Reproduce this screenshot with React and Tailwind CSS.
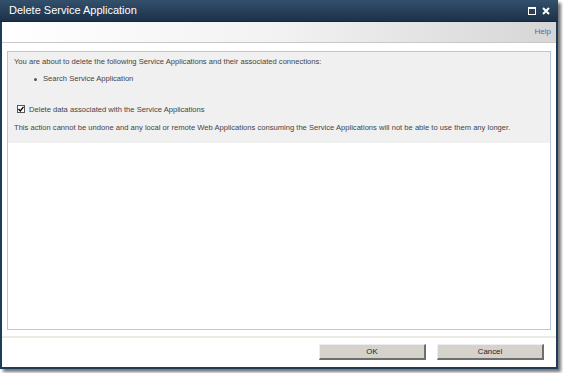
import React from 'react';

const font = { fontFamily: '"Liberation Sans", Arial, sans-serif' };

const App = () => {
    return (
        <div className="w-[563px] h-[373px] bg-white overflow-hidden" style={font}>
            <div className="w-[558px] h-[369px] flex flex-col shadow-[3px_3px_3px_rgba(0,0,0,0.55)]">
                {/* title bar */}
                <div className="h-[22px] flex items-center justify-between bg-gradient-to-b from-[#33506c] to-[#1d3149] border-b border-[#15263a] pl-[9px] pr-[8px]">
                    <span className="text-white text-[11px] leading-none">Delete Service Application</span>
                    <div className="flex items-center gap-[6px]">
                        <svg width="8" height="8" viewBox="0 0 8 8">
                            <rect x="0.5" y="0.5" width="7" height="7" fill="none" stroke="#fff" strokeWidth="1" />
                            <rect x="0" y="0" width="8" height="2" fill="#fff" />
                        </svg>
                        <svg width="8" height="8" viewBox="0 0 8 8">
                            <path d="M1 1 L7 7 M7 1 L1 7" stroke="#fff" strokeWidth="2" />
                        </svg>
                    </div>
                </div>

                <div className="flex-1 flex flex-col border-x-2 border-b-2 border-[#1f3b5a] bg-white">
                    {/* toolbar */}
                    <div className="h-[21px] flex items-center justify-end bg-gradient-to-r from-white via-[#f2f2f2] to-[#d6d6d6] border-b border-[#c8c8c8] pr-[5px]">
                        <span className="text-[8px] text-[#3a74b8]">Help</span>
                    </div>

                    {/* content */}
                    <div className="flex-1 flex flex-col px-[5px] pt-[8px]">
                        <div className="flex-1 border border-[#b8c8d8] bg-white">
                            <div className="bg-[#f0f0f0] h-[91px] pl-[6px] pt-[4px] text-[7.6px] text-[#444]">
                                <p>You are about to delete the following Service Applications and their associated connections:</p>
                                <div className="flex items-center mt-[6px] pl-[20px]">
                                    <span className="w-[3px] h-[3px] rounded-full bg-[#555] mr-[6px]" />
                                    <span>Search Service Application</span>
                                </div>
                                <div className="flex items-center mt-[19px] pl-[3px]">
                                    <span className="w-[8px] h-[8px] border border-[#555] bg-white flex items-center justify-center mr-[4px]">
                                        <svg width="6" height="6" viewBox="0 0 6 6">
                                            <path d="M0.5 3 L2.3 5 L5.5 0.8" fill="none" stroke="#000" strokeWidth="1.3" />
                                        </svg>
                                    </span>
                                    <span>Delete data associated with the Service Applications</span>
                                </div>
                                <p className="mt-[7px]">This action cannot be undone and any local or remote Web Applications consuming the Service Applications will not be able to use them any longer.</p>
                            </div>
                        </div>
                    </div>

                    {/* footer */}
                    <div className="h-[31px] mt-[6px] border-t-2 border-[#ebeae2] flex justify-end items-start pt-[6px] pr-[12px] gap-[11px]">
                        <button className="w-[107px] h-[16px] bg-[#d5d2cb] border-r-2 border-b-2 border-[#6e6e6e] border-t border-l border-t-[#eeeeee] border-l-[#eeeeee] text-[7.8px] text-[#222] leading-none">
                            OK
                        </button>
                        <button className="w-[107px] h-[16px] bg-[#d5d2cb] border-r-2 border-b-2 border-[#6e6e6e] border-t border-l border-t-[#eeeeee] border-l-[#eeeeee] text-[7.8px] text-[#222] leading-none">
                            Cancel
                        </button>
                    </div>
                </div>
            </div>
        </div>
    );
};

export default App;
